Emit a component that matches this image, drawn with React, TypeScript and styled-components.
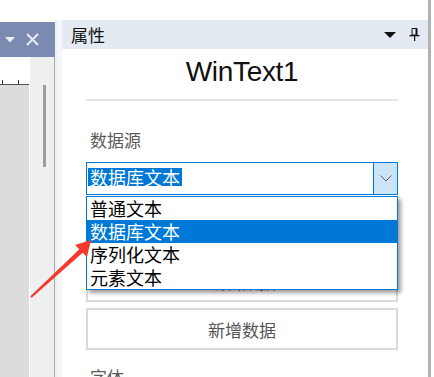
import React from 'react';
import styled, { createGlobalStyle } from 'styled-components';

const GlobalStyle = createGlobalStyle`
  html, body {
    margin: 0;
    padding: 0;
    background: #ffffff;
    overflow: hidden;
  }
  body {
    font-family: "Noto Sans CJK SC", "Liberation Sans", sans-serif;
  }
`;

const Page = styled.div`
  position: relative;
  display: flex;
  width: 434px;
  height: 377px;
  padding-top: 20px;
  box-sizing: border-box;
  overflow: hidden;
`;

/* ---------- left docked panel ---------- */

const LeftPane = styled.div`
  display: flex;
  flex-direction: column;
  flex-shrink: 0;
  width: 55px;
  margin-top: 2px;
`;

const LeftHeader = styled.div`
  display: flex;
  flex-shrink: 0;
  align-items: center;
  gap: 11px;
  height: 35px;
  padding-left: 5px;
  background: #7a8ab0;
  box-sizing: border-box;
`;

const LeftBody = styled.div`
  flex: 1;
  display: flex;
  border-right: 1px solid #a9a9a9;
`;

const RulerColumn = styled.div`
  display: flex;
  flex-direction: column;
  width: 30px;
  background: #ffffff;
`;

const RulerTicks = styled.div`
  display: flex;
  flex-shrink: 0;
  gap: 15px;
  height: 27px;
  align-items: flex-end;
  padding-left: 2px;
  box-sizing: border-box;
`;

const Tick = styled.span`
  width: 1px;
  height: 4px;
  background: #333;
`;

const RulerArea = styled.div`
  flex: 1;
  background: #dcdcdc;
  border-top: 1px solid #555;
  margin-right: 1px;
`;

const ScrollTrack = styled.div`
  flex: 1;
  display: flex;
  justify-content: center;
  padding-top: 28px;
  background: #efefef;
`;

const ScrollThumb = styled.div`
  width: 3px;
  height: 82px;
  margin-left: 4px;
  background: #9d9d9d;
`;

const Splitter = styled.div`
  flex-shrink: 0;
  width: 7px;
  background: linear-gradient(to right, #f0f0f0 0 2px, #f4f7fa 2px);
`;

/* ---------- property panel ---------- */

const PropPanel = styled.div`
  display: flex;
  flex-direction: column;
  flex-shrink: 0;
  width: 366px;
`;

const PanelHeader = styled.div`
  display: flex;
  flex-shrink: 0;
  align-items: center;
  height: 29px;
  padding: 0 8px 0 9px;
  background: #e4eaf2;
  box-sizing: border-box;
`;

const PanelTitle = styled.span`
  flex: 1;
  font-size: 17px;
  line-height: 17px;
  color: #111;
`;

const HeaderIcons = styled.div`
  display: flex;
  align-items: center;
  gap: 13px;
`;

const PanelBody = styled.div`
  position: relative;
  flex: 1;
  min-height: 0;
  display: flex;
  flex-direction: column;
  padding: 7px 30px 0 24px;
  background: #ffffff;
`;

const ObjectName = styled.div`
  flex-shrink: 0;
  font-family: "Liberation Sans", Arial, sans-serif;
  font-size: 28px;
  line-height: 32px;
  text-align: center;
  color: #111;
  letter-spacing: -0.3px;
`;

const Divider = styled.div`
  flex-shrink: 0;
  height: 2px;
  margin-top: 11px;
  background: #e2e6eb;
`;

const FieldLabel = styled.div<{ $top: number }>`
  flex-shrink: 0;
  margin-top: ${(p) => p.$top}px;
  padding-left: 4px;
  font-size: 17px;
  line-height: 17px;
  color: #5a5a5a;
`;

const SelectWrap = styled.div`
  position: relative;
  flex-shrink: 0;
  margin-top: 14px;
`;

const SelectBox = styled.div`
  display: flex;
  height: 33px;
  border: 1px solid #0078d7;
  box-sizing: border-box;
  background: #fff;
`;

const SelectValue = styled.div`
  flex: 1;
  padding: 3px 0 0 1px;
`;

const Highlighted = styled.span`
  display: inline-block;
  padding: 0 2px;
  font-size: 18px;
  line-height: 18px;
  color: #fff;
  background: #0078d7;
`;

const DropButton = styled.div`
  display: flex;
  align-items: center;
  justify-content: center;
  width: 23px;
  background: #cce4f7;
  border-left: 1px solid #0078d7;
`;

const OptionList = styled.ul`
  position: absolute;
  top: 100%;
  left: 0;
  right: 0;
  margin: 1px 0 0;
  padding: 0;
  list-style: none;
  background: #fff;
  border: 1px solid #0078d7;
  box-shadow: 3px 3px 4px rgba(0, 0, 0, 0.38);
  z-index: 2;
`;

const OptionItem = styled.li<{ $active?: boolean }>`
  height: 23px;
  padding-left: 3px;
  font-size: 18px;
  line-height: 22px;
  color: ${(p) => (p.$active ? '#fff' : '#000')};
  background: ${(p) => (p.$active ? '#0078d7' : 'transparent')};
`;

const ActionButton = styled.div<{ $top: number }>`
  display: flex;
  flex-shrink: 0;
  align-items: center;
  justify-content: center;
  height: 42px;
  margin-top: ${(p) => p.$top}px;
  border: 2px solid #dadada;
  box-sizing: border-box;
  font-size: 17px;
  color: #555;
  background: #fff;
`;

const RightEdge = styled.div`
  flex-shrink: 0;
  width: 3px;
  margin-top: -20px;
  background: #b2b2b2;
`;

const Arrow = styled.svg`
  position: absolute;
  left: 0;
  top: 0;
  pointer-events: none;
  z-index: 3;
`;

const options = ['普通文本', '数据库文本', '序列化文本', '元素文本'];

export default function App() {
  return (
    <>
      <GlobalStyle />
      <Page>
        <LeftPane>
          <LeftHeader>
            <svg width="10" height="6" viewBox="0 0 10 6">
              <polygon points="0,0 10,0 5,5.5" fill="#e8ecf4" />
            </svg>
            <svg width="13" height="13" viewBox="0 0 13 13">
              <path d="M1 1 L12 12 M12 1 L1 12" stroke="#e8ecf4" strokeWidth="2" />
            </svg>
          </LeftHeader>
          <LeftBody>
            <RulerColumn>
              <RulerTicks>
                <Tick />
                <Tick />
              </RulerTicks>
              <RulerArea />
            </RulerColumn>
            <ScrollTrack>
              <ScrollThumb />
            </ScrollTrack>
          </LeftBody>
        </LeftPane>
        <Splitter />
        <PropPanel>
          <PanelHeader>
            <PanelTitle>属性</PanelTitle>
            <HeaderIcons>
              <svg width="12" height="6" viewBox="0 0 12 6">
                <polygon points="0,0 12,0 6,6" fill="#111" />
              </svg>
              <svg width="11" height="13" viewBox="0 0 11 13">
                <path d="M3 0.5 H8 V7 H3 Z" fill="none" stroke="#111" strokeWidth="1" />
                <rect x="6.5" y="0.5" width="1.5" height="6.5" fill="#111" />
                <rect x="0.5" y="7" width="10" height="1.3" fill="#111" />
                <rect x="5" y="8" width="1.2" height="5" fill="#111" />
              </svg>
            </HeaderIcons>
          </PanelHeader>
          <PanelBody>
            <ObjectName>WinText1</ObjectName>
            <Divider />
            <FieldLabel $top={30}>数据源</FieldLabel>
            <SelectWrap>
              <SelectBox>
                <SelectValue>
                  <Highlighted>数据库文本</Highlighted>
                </SelectValue>
                <DropButton>
                  <svg width="12" height="7" viewBox="0 0 12 7">
                    <polyline points="0.5,0.5 6,6 11.5,0.5" fill="none" stroke="#5f5f5f" strokeWidth="1" />
                  </svg>
                </DropButton>
              </SelectBox>
              <OptionList>
                {options.map((o) => (
                  <OptionItem key={o} $active={o === '数据库文本'}>
                    {o}
                  </OptionItem>
                ))}
              </OptionList>
            </SelectWrap>
            <ActionButton $top={65}>编辑数据</ActionButton>
            <ActionButton $top={6}>新增数据</ActionButton>
            <FieldLabel $top={18}>字体</FieldLabel>
          </PanelBody>
        </PropPanel>
        <RightEdge />
        <Arrow width="434" height="377" viewBox="0 0 434 377">
          <polygon
            points="30.3,296.3 79.3,249.2 75,245 91,240 87,257 82.7,252.8 31.7,297.7"
            fill="#f43a2c"
          />
        </Arrow>
      </Page>
    </>
  );
}
